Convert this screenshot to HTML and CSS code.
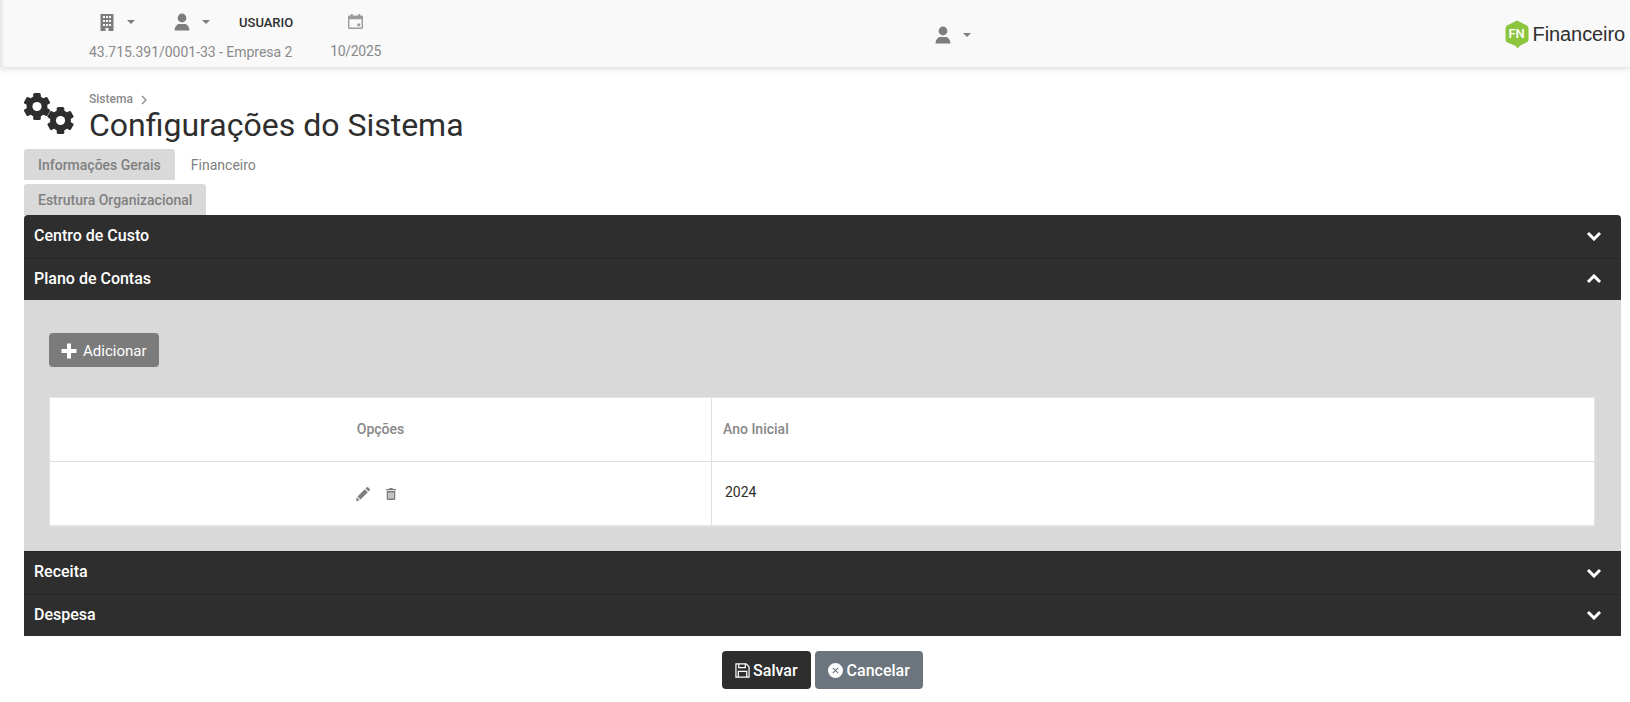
FILE: index.html
```html
<!DOCTYPE html>
<html lang="pt-BR">
<head>
<meta charset="utf-8">
<title>Configurações do Sistema</title>
<link rel="stylesheet" href="styles.css">
</head>
<body>
<header class="topbar">
  <div class="ctx">
    <div class="ctx-left">
      <div class="ctx-icons">
        <span class="pick pick-company">
          <svg class="ico-top" viewBox="0 0 16 18"><path fill-rule="evenodd" d="M1.500 1h13v17H9.500v-3h-3v3h-5zM4 3v2h2V3zm3 0v2h2V3zm3 0v2h2V3zM4 7v2h2V7zm3 0v2h2V7zm3 0v2h2V7zM4 11v2h2v-2zm3 0v2h2v-2zm3 0v2h2v-2z"/></svg>
          <i class="caret"></i>
        </span>
        <span class="pick pick-user">
          <svg class="ico-top" viewBox="0 0 16 18"><circle cx="8" cy="5" r="4.400"/><path d="M0.600 17.500c0-4.200 2.600-6.600 4.600-6.600h5.600c2 0 4.600 2.400 4.600 6.600z"/></svg>
          <i class="caret"></i>
        </span>
        <span class="user-name">USUARIO</span>
      </div>
      <div class="ctx-text">43.715.391/0001-33 - Empresa 2</div>
    </div>
    <div class="ctx-date">
      <svg class="ico-cal" viewBox="0 0 16 16"><path fill-rule="evenodd" d="M3 0h2v1.500h6V0h2v1.500h1.500A1.500 1.500 0 0 1 16 3v11.500a1.500 1.500 0 0 1-1.500 1.500h-13A1.500 1.500 0 0 1 0 14.500V3a1.500 1.500 0 0 1 1.500-1.500H3zM1.500 5.500v9h13v-9zM10 10h3v3h-3z"/></svg>
      <div class="ctx-text ctx-month">10/2025</div>
    </div>
  </div>
  <span class="pick pick-account">
    <svg class="ico-top" viewBox="0 0 16 18"><circle cx="8" cy="5" r="4.400"/><path d="M0.600 17.500c0-4.200 2.600-6.600 4.600-6.600h5.600c2 0 4.600 2.400 4.600 6.600z"/></svg>
    <i class="caret"></i>
  </span>
  <div class="brand">
    <span class="logo">
      <svg viewBox="0 0 24 29"><path d="M12 0.500 21.500 5.200Q23.500 6.200 23.500 8.400V19.400Q23.500 21.600 21.500 22.600L14.800 25.800 12.500 28.500 10.800 26 2.500 22.600Q0.500 21.600 0.500 19.400V8.400Q0.500 6.200 2.500 5.200z" fill="#8cc63f"/></svg>
      <span class="logo-text">FN</span>
    </span>
    <span class="brand-name">Financeiro</span>
  </div>
</header>

<main class="page">
  <div class="title-row">
    <svg class="ico-gears" viewBox="0 0 50 42">
      <defs>
        <g id="gear">
          <circle r="10.500" fill="#2e2e2e"/>
          <rect x="-3.800" y="-13.500" width="7.600" height="27" rx="1.600" fill="#2e2e2e"/>
          <rect x="-3.800" y="-13.500" width="7.600" height="27" rx="1.600" fill="#2e2e2e" transform="rotate(60)"/>
          <rect x="-3.800" y="-13.500" width="7.600" height="27" rx="1.600" fill="#2e2e2e" transform="rotate(120)"/>
          <circle r="4.600" fill="#fff"/>
        </g>
      </defs>
      <use href="#gear" transform="translate(13 14.500)"/>
      <use href="#gear" transform="translate(36.500 28.500)"/>
    </svg>
    <div class="title-text">
      <div class="crumb">Sistema <svg class="crumb-sep" viewBox="0 0 6 10"><path d="M1 1l4 4-4 4"/></svg></div>
      <h1 class="title">Configurações do Sistema</h1>
    </div>
  </div>

  <nav class="tabs">
    <a class="tab tab-gray">Informações Gerais</a>
    <a class="tab">Financeiro</a>
    <a class="tab tab-gray">Estrutura Organizacional</a>
  </nav>

  <section class="accordion">
    <div class="acc-head acc-first">
      <span class="acc-label">Centro de Custo</span>
      <svg class="chev" viewBox="0 0 16 10"><path d="M2 2l6 6 6-6"/></svg>
    </div>
    <div class="acc-head">
      <span class="acc-label">Plano de Contas</span>
      <svg class="chev" viewBox="0 0 16 10"><path d="M2 8l6-6 6 6"/></svg>
    </div>
    <div class="acc-body">
      <button class="btn-add" type="button">
        <svg class="ico-plus" viewBox="0 0 16 16"><path d="M6 0.500h4v5.500h5.500v4H10v5.500H6V10H0.500V6H6z"/></svg>
        Adicionar
      </button>
      <table class="grid">
        <thead>
          <tr><th class="col-opt">Opções</th><th class="col-year">Ano Inicial</th></tr>
        </thead>
        <tbody>
          <tr>
            <td class="col-opt">
              <span class="row-icons">
                <svg class="ico-pencil" viewBox="0 0 14 14"><path d="M0 14l.8-3.700 2.900 2.900zM1.500 9.500 8.800 2.200l3 3-7.300 7.300zM9.600 1.400 10.500.5a1.300 1.300 0 0 1 1.800 0l1.200 1.200a1.300 1.300 0 0 1 0 1.800l-.9.900z"/></svg>
                <svg class="ico-trash" viewBox="0 0 10 12"><path fill-rule="evenodd" d="M3.500 0h3l.5 1h3v1.300H0V1h3zM.7 3h8.600v7.800A1.200 1.200 0 0 1 8.100 12H1.900A1.200 1.200 0 0 1 .7 10.800zM2.400 4.500v6h1.100v-6zm2.050 0v6h1.100v-6zm2.050 0v6h1.100v-6z"/></svg>
              </span>
            </td>
            <td class="col-year cell-year">2024</td>
          </tr>
        </tbody>
      </table>
    </div>
    <div class="acc-head">
      <span class="acc-label">Receita</span>
      <svg class="chev" viewBox="0 0 16 10"><path d="M2 2l6 6 6-6"/></svg>
    </div>
    <div class="acc-head">
      <span class="acc-label">Despesa</span>
      <svg class="chev" viewBox="0 0 16 10"><path d="M2 2l6 6 6-6"/></svg>
    </div>
  </section>

  <div class="actions">
    <button class="btn btn-save" type="button">
      <svg class="ico-btn" viewBox="0 0 16 16"><path fill="none" stroke="#fff" stroke-width="1.300" d="M1 1h11l3 3v11H1zM4 1v4h7V1M3.500 15V9h9v6"/></svg>
      Salvar
    </button>
    <button class="btn btn-cancel" type="button">
      <svg class="ico-btn" viewBox="0 0 16 16"><path fill="#fff" fill-rule="evenodd" d="M8 0a8 8 0 1 1 0 16A8 8 0 0 1 8 0zM5.500 4.700 4.700 5.500 7.200 8 4.700 10.500l.8.800L8 8.800l2.500 2.500.8-.8L8.800 8l2.500-2.500-.8-.8L8 7.200z"/></svg>
      Cancelar
    </button>
  </div>
</main>
</body>
</html>
```
FILE: styles.css
```css
* { box-sizing: border-box; }
html, body { margin: 0; padding: 0; }
body {
  background: #fff;
  color: #2e2e2e;
  font-family: Roboto, "Liberation Sans", sans-serif;
  font-size: 14px;
  height: 702px;
  overflow: hidden;
}
.topbar {
  height: 67px;
  background: #f9f9f9;
  box-shadow: 0 2px 6px rgba(0, 0, 0, .14), inset 4px 0 4px -3px rgba(0, 0, 0, .12);
  display: flex;
  align-items: center;
  padding: 0 5px 0 89px;
}
.ctx { display: flex; gap: 37px; align-items: flex-start; padding-top: 4px; }
.ctx-icons { display: flex; align-items: center; height: 22px; margin-bottom: 11px; margin-top: 1px; }
.ctx-text { color: #8a8a8a; font-size: 14px; line-height: 17px; white-space: nowrap; letter-spacing: -.03px; }
.ctx-month { letter-spacing: -.3px; }
.pick { display: inline-flex; align-items: center; }
.ico-top { width: 16px; height: 18px; fill: #7d7d7d; display: block; }
.caret {
  width: 0; height: 0;
  border-left: 4px solid transparent;
  border-right: 4px solid transparent;
  border-top: 4px solid #7d7d7d;
  margin-left: 12px;
}
.pick-company { margin-left: 10px; }
.pick-user { margin-left: 39px; }
.user-name { font-size: 13px; font-weight: 500; color: #2e2e2e; margin-left: 29px; }
.ctx-date { display: flex; flex-direction: column; align-items: center; }
.ico-cal { width: 15px; height: 15px; fill: #9a9a9a; display: block; margin: 4px 0 14px; }
.pick-account { margin-left: 554px; margin-top: 3px; }
.brand { margin-left: auto; display: flex; align-items: center; gap: 4px; margin-top: 1px; }
.logo { position: relative; width: 24px; height: 29px; display: block; }
.logo svg { width: 24px; height: 29px; display: block; }
.logo-text { position: absolute; left: 0; right: 0; top: 6px; text-align: center; font: 500 13px/15px Roboto, sans-serif; color: #fff; letter-spacing: -.2px; }
.brand-name { font: 400 20px/24px "Liberation Sans", Arial, sans-serif; color: #2e2e2e; letter-spacing: -.1px; }

.page { padding: 0 9px 0 24px; }
.title-row { display: flex; margin-top: 25px; height: 57px; }
.ico-gears { width: 50px; height: 42px; display: block; margin-right: 15px; }
.crumb { font-size: 12px; font-weight: 500; color: #8a8a8a; line-height: 15px; display: flex; align-items: center; gap: 8px; }
.crumb-sep { width: 6px; height: 10px; fill: none; stroke: #8a8a8a; stroke-width: 1.300; }
.title { margin: -1px 0 0; font-size: 32px; font-weight: 400; line-height: 38px; color: #2e2e2e; }

.tabs { display: flex; flex-wrap: wrap; width: 300px; row-gap: 4px; }
.tab {
  height: 31px;
  padding: 1px 14px 0;
  font-size: 14px;
  line-height: 31px;
  color: #808080;
  border-radius: 3px 3px 0 0;
  white-space: nowrap;
}
.tab-gray { background: #d9d9d9; font-weight: 500; }
.tab:nth-child(2) { padding: 1px 16px 0; }

.accordion { border-radius: 4px 4px 0 0; overflow: hidden; }
.acc-head {
  height: 42.500px;
  background: #2e2e2e;
  color: #fff;
  display: flex;
  align-items: center;
  justify-content: space-between;
  padding: 0 19px 0 10px;
  font-size: 16px;
  font-weight: 500;
  border-top: 1px solid #262626;
}
.acc-first { border-top: 0; }
.acc-label { margin-bottom: 2px; }
.chev { width: 16px; height: 10px; fill: none; stroke: #fff; stroke-width: 3; }
.acc-body { background: #d9d9d9; height: 251px; padding: 33px 26px 0 25px; }
.btn-add {
  height: 34px;
  width: 110px;
  background: #7b7b7b;
  color: #fff;
  border: 0;
  border-radius: 4px;
  font: 400 15px Roboto, sans-serif;
  display: flex;
  align-items: center;
  gap: 6px;
  padding: 1px 0 0 12px;
}
.ico-plus { width: 16px; height: 16px; fill: #fff; }
.grid {
  width: 100%;
  margin-top: 30px;
  border-collapse: collapse;
  table-layout: fixed;
  background: #fff;
  border: 1px solid #e2e3e5;
  border-bottom-width: 2px;
}
.grid th, .grid td { height: 64px; padding: 0 11px 2px; font-size: 14px; }
.grid th { font-weight: 500; color: #888; border-bottom: 1px solid #e0e0e0; text-align: left; }
.grid .col-opt { width: 662px; text-align: center; border-right: 1px solid #e0e0e0; }
.cell-year { color: #2e2e2e; padding-left: 13px !important; }
.row-icons { display: inline-flex; align-items: center; gap: 16px; vertical-align: middle; margin-right: 10px; margin-top: 2px; }
.ico-pencil { width: 14px; height: 14px; fill: #7d7d7d; display: block; }
.ico-trash { width: 10px; height: 12px; fill: #7d7d7d; display: block; }

.actions { display: flex; justify-content: center; gap: 4px; margin-top: 15px; }
.btn {
  height: 38px;
  border: 0;
  border-radius: 4px;
  color: #fff;
  font: 500 16px Roboto, sans-serif;
  display: flex;
  align-items: center;
  gap: 3px;
  padding: 0 13px;
}
.btn-save { background: #2e2e2e; }
.btn-cancel { background: #6c757d; gap: 4px; }
.ico-btn { width: 15px; height: 15px; display: block; }
```
